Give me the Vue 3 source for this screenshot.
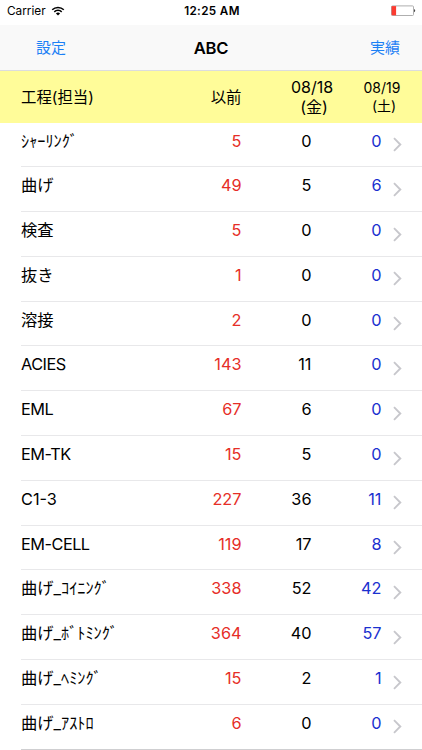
<script setup>
const rows = [
  ['ｼｬｰﾘﾝｸﾞ', 5, 0, 0],
  ['曲げ', 49, 5, 6],
  ['検査', 5, 0, 0],
  ['抜き', 1, 0, 0],
  ['溶接', 2, 0, 0],
  ['ACIES', 143, 11, 0],
  ['EML', 67, 6, 0],
  ['EM-TK', 15, 5, 0],
  ['C1-3', 227, 36, 11],
  ['EM-CELL', 119, 17, 8],
  ['曲げ_ｺｲﾆﾝｸﾞ', 338, 52, 42],
  ['曲げ_ﾎﾞﾄﾐﾝｸﾞ', 364, 40, 57],
  ['曲げ_ﾍﾐﾝｸﾞ', 15, 2, 1],
  ['曲げ_ｱｽﾄﾛ', 6, 0, 0],
]
const isWord = (name) => /^[A-Z-]+$/.test(name)
</script>

<template>
  <div class="screen">
    <div class="status">
      <div class="carrier">
        <span>Carrier</span>
        <svg class="wifi" width="14" height="10" viewBox="0 0 14 10">
          <g fill="none" stroke="#000" stroke-width="1.5">
            <path d="M1.2 3.8a8.2 8.2 0 0 1 11.6 0" />
            <path d="M3.3 5.9a5.2 5.2 0 0 1 7.4 0" />
          </g>
          <path d="M7 9.6 4.9 7.5a3 3 0 0 1 4.2 0z" />
        </svg>
      </div>
      <span class="time">12:25 AM</span>
      <div class="battery">
        <svg width="26" height="12" viewBox="0 0 26 12">
          <rect x="1.5" y="0.9" width="22" height="9.6" rx="1" fill="#fff" stroke="#a6a6a6" stroke-width="0.9" />
          <rect x="1.6" y="1.1" width="4.5" height="9.2" fill="#fb3b30" />
          <path d="M24.2 4.1c1.3.5 1.3 2.7 0 3.2z" fill="#222" />
        </svg>
      </div>
    </div>
    <nav class="nav">
      <a class="left">設定</a>
      <h1>ABC</h1>
      <a class="right">実績</a>
    </nav>
    <div class="grid head">
      <span class="title">工程(担当)</span>
      <span class="title before">以前</span>
      <span class="day"><span>08/18</span><span class="weekday">(金)</span></span>
      <span class="day small"><span>08/19</span><span class="weekday">(土)</span></span>
    </div>
    <div v-for="row in rows" :key="row[0]" class="grid row">
      <span class="name" :class="{ word: isWord(row[0]) }">{{ row[0] }}</span>
      <span class="num red">{{ row[1] }}</span>
      <span class="num">{{ row[2] }}</span>
      <span class="num blue">{{ row[3] }}</span>
      <svg class="chevron" width="9" height="15" viewBox="0 0 9 15">
        <path d="M1 1.2 7.3 7.5 1 13.8" fill="none" stroke="#c7c7cc" stroke-width="1.9" />
      </svg>
    </div>
  </div>
</template>

<style>
body {
  margin: 0;
  background: #fff;
  overflow: hidden;
}
</style>

<style scoped>
.screen {
  width: 422px;
  height: 750px;
  overflow: hidden;
  background: #fff;
  color: #000;
  font-family: Inter, "Noto Sans CJK JP", sans-serif;
  font-size: 16.3px;
}
.status {
  display: grid;
  grid-template-columns: 1fr auto 1fr;
  align-items: center;
  height: 25px;
  padding: 0 6px 3px 7px;
  box-sizing: border-box;
  font-size: 11.8px;
}
.carrier {
  display: flex;
  align-items: center;
  gap: 5px;
}
.time {
  margin-left: 1px;
  font-weight: 600;
  font-size: 11.7px;
  letter-spacing: 0.35px;
}
.battery {
  display: flex;
  justify-content: flex-end;
}
.nav {
  display: grid;
  grid-template-columns: 1fr auto 1fr;
  align-items: center;
  height: 46px;
  padding: 0 22px 0 36px;
  box-sizing: border-box;
  background: #f9f9f9;
  border-bottom: 1px solid #dcdcde;
}
.nav h1 {
  margin: 0 14px 0 0;
  font-size: 16.6px;
  font-weight: 600;
  letter-spacing: -0.3px;
  line-height: 24px;
}
.nav a {
  color: #1c80f5;
  font-size: 15px;
  line-height: 24px;
}
.nav .right {
  text-align: right;
}
.grid {
  display: grid;
  grid-template-columns: 150px 70.5px 70px 70px 30px;
  margin-left: 21px;
}
.head {
  height: 51.5px;
  margin-left: 0;
  padding-left: 21px;
  align-items: center;
  background: #fffc99;
}
.title {
  padding-bottom: 2px;
  font-size: 15.4px;
}
.before {
  text-align: right;
}
.day {
  display: flex;
  flex-direction: column;
  justify-self: end;
  width: 54px;
  margin-right: -27.5px;
  text-align: center;
  font-size: 16px;
  line-height: 20px;
}
.weekday {
  padding-left: 4px;
}
.small {
  font-size: 14px;
  line-height: 18px;
}
.row {
  height: 44.8px;
  box-sizing: border-box;
  border-bottom: 1px solid #e8e8ea;
  line-height: 24px;
  padding-top: 6px;
}
.row:last-child {
  border-bottom-color: #cfcfd1;
}
.name {
  white-space: nowrap;
}
.word {
  letter-spacing: -0.5px;
}
.num {
  text-align: right;
}
.red {
  color: #e62e27;
}
.blue {
  color: #1b30cf;
}
.chevron {
  margin: 8.5px 0 0 11px;
}
</style>
